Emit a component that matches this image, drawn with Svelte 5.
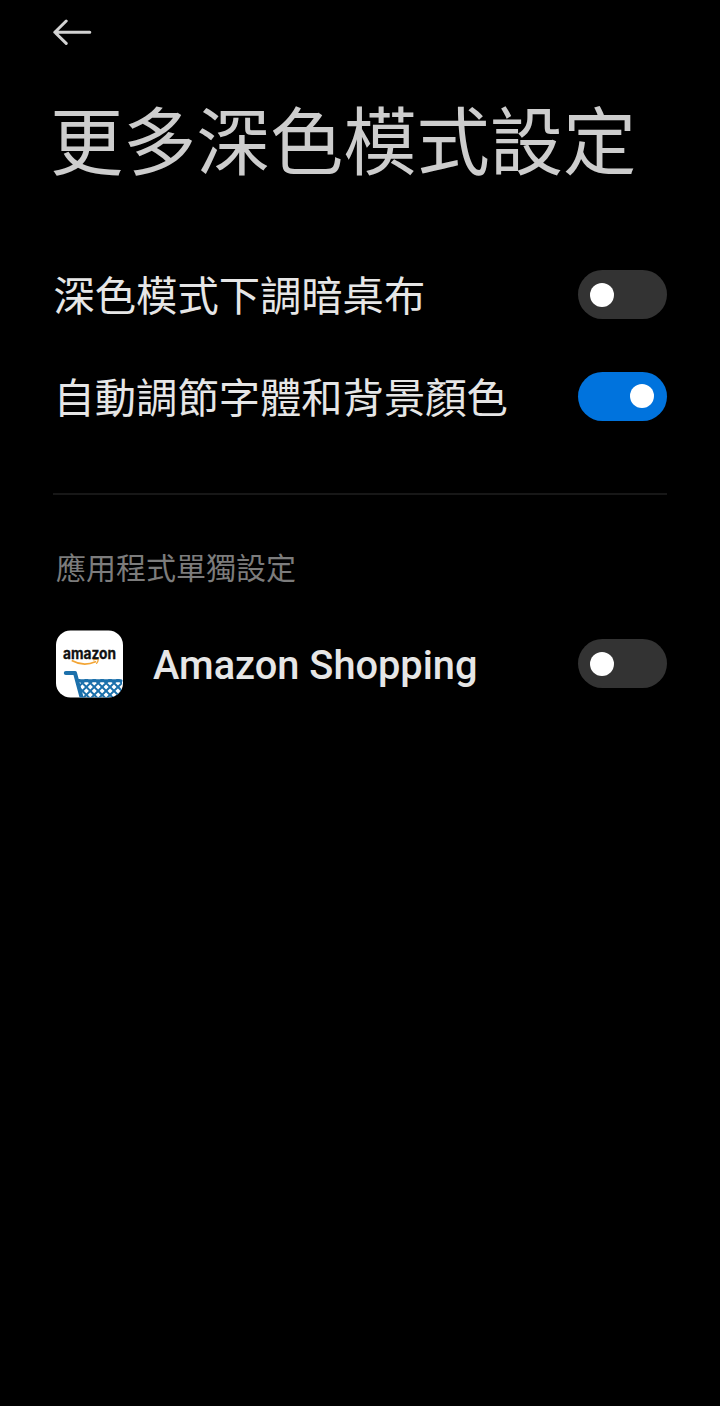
<script lang="ts">
	let options = $state([
		{label: '深色模式下調暗桌布', on: false},
		{label: '自動調節字體和背景顏色', on: true},
	]);
	let apps = $state([
		{label: 'Amazon Shopping', on: false},
	]);

	// diagonal wires of the cart basket
	const wires = Array.from({length: 12}, (_, i) => 2.7 + i * 7.9);
</script>

{#snippet toggle(item)}
	<button
		class="toggle"
		class:on={item.on}
		role="switch"
		aria-checked={item.on}
		aria-label={item.label}
		onclick={() => item.on = !item.on}
	>
		<span class="knob"></span>
	</button>
{/snippet}

<main class="page">
	<button class="back" aria-label="返回">
		<svg width="40" height="28" viewBox="0 0 40 28">
			<path d="M13.2 3 L1.8 14.2 L13.2 25.4 M2 14.2 H36.8" />
		</svg>
	</button>

	<h1>更多深色模式設定</h1>

	<div class="options">
		{#each options as option}
			<div class="row">
				<span class="label">{option.label}</span>
				{@render toggle(option)}
			</div>
		{/each}
	</div>

	<h2>應用程式單獨設定</h2>

	{#each apps as app}
		<div class="row app">
			<svg class="icon" width="68" height="68" viewBox="0 0 68 68">
				<defs>
					<clipPath id="tile"><rect y="0.5" width="67" height="67" rx="14.5" /></clipPath>
					<clipPath id="basket"><path d="M22 49 H66 V68 H27 Z" /></clipPath>
				</defs>
				<g clip-path="url(#tile)">
					<rect width="68" height="68" fill="#fff" />
					<path class="cart" d="M9.8 43 H19 L26 69" />
					<path class="cart rim" d="M22 50.7 H65" />
					<g clip-path="url(#basket)">
						{#each wires as x}
							<path class="mesh" d="M{x - 4} 49 l20 20 M{x + 4} 49 l-20 20" />
						{/each}
					</g>
				</g>
				<path class="smile" d="M16.3 30.8 Q27.5 37 39.5 31.8" />
				<path class="smile tip" d="M37.6 29.8 Q42.4 28.4 42.2 29.8 Q42.1 31.8 40.6 33.4" />
				<text x="7" y="28.6" textLength="53" lengthAdjust="spacingAndGlyphs">amazon</text>
			</svg>
			<span class="label">{app.label}</span>
			{@render toggle(app)}
		</div>
	{/each}
</main>

<style>
:global(body) {
	margin: 0;
	background: #000;
}

.page {
	box-sizing: border-box;
	min-height: 1406px;
	padding: 18px 53.5px 0 53px;
	background: #000;
	color: #e6e6e6;
	font-family: Roboto, "Noto Sans CJK TC", sans-serif;
}

button {
	display: block;
	border: 0;
	padding: 0;
	background: none;
	cursor: pointer;
}

.back {
	width: 40px;
	height: 28px;
}
.back svg {
	display: block;
}
.back path {
	fill: none;
	stroke: #d2d2d2;
	stroke-width: 3;
	stroke-linecap: round;
	stroke-linejoin: round;
}

h1 {
	margin: 45px -20px 0 -3px;
	font-size: 73.3px;
	font-weight: 400;
	line-height: 106px;
	white-space: nowrap;
	color: #cdcdcd;
}

.options {
	padding: 47px 0 46px;
	border-bottom: 2px solid #171717;
}

.row {
	display: flex;
	align-items: center;
	height: 101.4px;
}
.label {
	flex: 1;
	padding: 5px 0 0 0.5px;
	font-size: 41.3px;
	line-height: 60px;
	white-space: nowrap;
}

h2 {
	margin: 52px 0 0 3px;
	font-size: 30px;
	font-weight: 400;
	line-height: 44px;
	color: #7c7c7c;
}

.app {
	margin-top: 22.5px;
}
.app .label {
	padding-left: 0;
	font-size: 39.75px;
	font-weight: 500;
}
.icon {
	margin: 0 29px 0 3px;
}
.icon text {
	font: 700 15px Inter, sans-serif;
	fill: #111;
	stroke: #111;
	stroke-width: 0.3;
}
.smile {
	fill: none;
	stroke: #f3a535;
	stroke-width: 1.7;
	stroke-linecap: round;
}
.tip {
	stroke-width: 1.3;
}
.cart {
	fill: none;
	stroke: #1c70ab;
	stroke-width: 4;
	stroke-linecap: round;
	stroke-linejoin: round;
}
.rim {
	stroke-width: 3;
}
.mesh {
	fill: none;
	stroke: #1c70ab;
	stroke-width: 2;
}

.toggle {
	display: flex;
	align-items: center;
	box-sizing: border-box;
	width: 89px;
	height: 49px;
	padding: 0 12.5px;
	border-radius: 25px;
	background: #333;
}
.toggle.on {
	justify-content: flex-end;
	background: #0073dd;
}
.knob {
	width: 24px;
	height: 24px;
	border-radius: 50%;
	background: #fff;
}
</style>
